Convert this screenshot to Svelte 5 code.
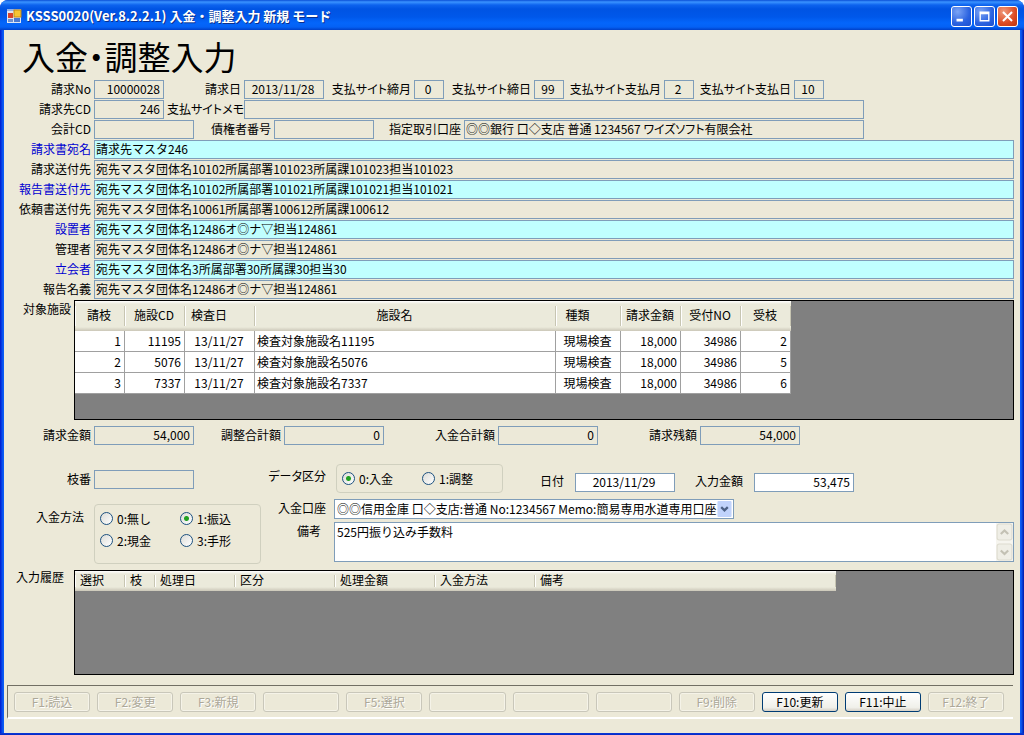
<script>
  const addressees = [
    { label: '請求書宛名', value: '請求先マスタ246', linked: true },
    { label: '請求送付先', value: '宛先マスタ団体名10102所属部署101023所属課101023担当101023' },
    {
      label: '報告書送付先',
      value: '宛先マスタ団体名10102所属部署101021所属課101021担当101021',
      linked: true
    },
    { label: '依頼書送付先', value: '宛先マスタ団体名10061所属部署100612所属課100612' },
    { label: '設置者', value: '宛先マスタ団体名12486オ◎ナ▽担当124861', linked: true },
    { label: '管理者', value: '宛先マスタ団体名12486オ◎ナ▽担当124861' },
    { label: '立会者', value: '宛先マスタ団体名3所属部署30所属課30担当30', linked: true },
    { label: '報告名義', value: '宛先マスタ団体名12486オ◎ナ▽担当124861' }
  ];

  const totals = [
    { label: '請求金額', value: '54,000' },
    { label: '調整合計額', value: '0' },
    { label: '入金合計額', value: '0' },
    { label: '請求残額', value: '54,000' }
  ];

  const facilityHeads = ['請枝', '施設CD', '検査日', '施設名', '種類', '請求金額', '受付NO', '受枝'];
  const facilities = [
    { no: 1, code: '11195', branch: 2 },
    { no: 2, code: '5076', branch: 5 },
    { no: 3, code: '7337', branch: 6 }
  ];

  const historyHeads = ['選択', '枝', '処理日', '区分', '処理金額', '入金方法', '備考'];

  const methods = ['0:無し', '1:振込', '2:現金', '3:手形'];
  const kinds = ['0:入金', '1:調整'];

  const functionKeys = [
    { label: 'F1:読込' },
    { label: 'F2:変更' },
    { label: 'F3:新規' },
    { label: '' },
    { label: 'F5:選択' },
    { label: '' },
    { label: '' },
    { label: '' },
    { label: 'F9:削除' },
    { label: 'F10:更新', enabled: true },
    { label: 'F11:中止', enabled: true },
    { label: 'F12:終了' }
  ];

  let method = $state('1:振込');
  let kind = $state('0:入金');
  let payDate = $state('2013/11/29');
  let amount = $state('53,475');
  let note = $state('525円振り込み手数料');
</script>

<div class="window">
  <header class="titlebar">
    <svg class="app-icon" viewBox="0 0 16 16">
      <rect x="0" y="1" width="14" height="14" fill="#dfe6f2" />
      <rect x="0" y="1" width="14" height="2" fill="#8fb0ea" />
      <rect x="1" y="5" width="5" height="5" fill="#d8442c" />
      <rect x="7" y="2" width="7" height="7" fill="#f6c634" stroke="#c58a12" />
      <rect x="1" y="11" width="5" height="3" fill="#6d8fd0" />
      <rect x="7" y="10" width="6" height="4" fill="#4b79d0" />
    </svg>
    <span class="caption">KSSS0020(Ver.8.2.2.1) 入金・調整入力 新規 モード</span>
    <button class="sys" aria-label="最小化">
      <svg viewBox="0 0 21 21"><rect x="5" y="13" width="7" height="3" fill="#fff" /></svg>
    </button>
    <button class="sys" aria-label="最大化">
      <svg viewBox="0 0 21 21">
        <path d="M5 5h11v11H5zM6.500 8v6.500h8V8z" fill="#fff" fill-rule="evenodd" />
      </svg>
    </button>
    <button class="sys close" aria-label="閉じる">
      <svg viewBox="0 0 21 21">
        <path d="M5.500 5.500l10 10M15.500 5.500l-10 10" stroke="#fff" stroke-width="2.200" />
      </svg>
    </button>
  </header>

  <main>
    <h1>入金・調整入力</h1>

    <section class="stack">
      <div class="row basic">
        <label for="bill-no">請求No</label>
        <input id="bill-no" class="num" value="10000028" readonly />
        <label for="bill-date">請求日</label>
        <input id="bill-date" class="mid" value="2013/11/28" readonly />
        <label for="close-month">支払サイト締月</label>
        <input id="close-month" class="mid" value="0" readonly />
        <label for="close-day">支払サイト締日</label>
        <input id="close-day" class="mid" value="99" readonly />
        <label for="pay-month">支払サイト支払月</label>
        <input id="pay-month" class="mid" value="2" readonly />
        <label for="pay-day">支払サイト支払日</label>
        <input id="pay-day" class="mid" value="10" readonly />
      </div>
      <div class="row memo">
        <label for="bill-cd">請求先CD</label>
        <input id="bill-cd" class="num" value="246" readonly />
        <label for="site-memo">支払サイトメモ</label>
        <input id="site-memo" readonly />
      </div>
      <div class="row account">
        <label for="acc-cd">会計CD</label>
        <input id="acc-cd" readonly />
        <label for="creditor">債権者番号</label>
        <input id="creditor" readonly />
        <label for="bank">指定取引口座</label>
        <input id="bank" value="◎◎銀行 口◇支店 普通 1234567 ワイズソフト有限会社" readonly />
      </div>
      {#each addressees as item, i (item.label)}
        <div class="row wide" class:linked={item.linked}>
          <label for="addr-{i}">{item.label}</label>
          <input id="addr-{i}" value={item.value} readonly />
        </div>
      {/each}
    </section>

    <section class="list">
      <h2>対象施設</h2>
      <div class="sheet facilities">
        <table>
          <colgroup>
            <col class="c50" /><col class="c60" /><col class="c70" /><col class="c300" />
            <col class="c65" /><col class="c60" /><col class="c60" /><col class="c50" />
          </colgroup>
          <thead>
            <tr>
              {#each facilityHeads as head}
                <th>{head}</th>
              {/each}
            </tr>
          </thead>
          <tbody>
            {#each facilities as f (f.no)}
              <tr>
                <td class="num">{f.no}</td>
                <td class="num">{f.code}</td>
                <td class="mid">13/11/27</td>
                <td>検査対象施設名{f.code}</td>
                <td class="mid">現場検査</td>
                <td class="num">18,000</td>
                <td class="num">34986</td>
                <td class="num">{f.branch}</td>
              </tr>
            {/each}
          </tbody>
        </table>
      </div>
    </section>

    <section class="row totals">
      {#each totals as t, i (t.label)}
        <label for="total-{i}">{t.label}</label>
        <input id="total-{i}" class="num" value={t.value} readonly />
      {/each}
    </section>

    <section class="entry">
      <div class="entry-left">
        <div class="row branch">
          <label for="branch">枝番</label>
          <input id="branch" readonly />
        </div>
        <div class="row method">
          <span class="name" id="method-name">入金方法</span>
          <div class="group" role="radiogroup" aria-labelledby="method-name">
            {#each methods as m (m)}
              <label class="radio">
                <input type="radio" name="method" value={m} bind:group={method} />{m}
              </label>
            {/each}
          </div>
        </div>
      </div>

      <div class="entry-right">
        <div class="row kind">
          <span class="name" id="kind-name">データ区分</span>
          <div class="group" role="radiogroup" aria-labelledby="kind-name">
            {#each kinds as k (k)}
              <label class="radio">
                <input type="radio" name="kind" value={k} bind:group={kind} />{k}
              </label>
            {/each}
          </div>
          <label for="pay-date">日付</label>
          <input id="pay-date" class="mid" bind:value={payDate} />
          <label for="amount">入力金額</label>
          <input id="amount" class="num" bind:value={amount} />
        </div>
        <div class="row bank">
          <label for="bank-account">入金口座</label>
          <div class="select">
            <select id="bank-account">
              <option>◎◎信用金庫 口◇支店:普通 No:1234567 Memo:簡易専用水道専用口座</option>
            </select>
            <svg viewBox="0 0 15 17">
              <rect width="15" height="17" rx="1" fill="#c1d3fb" />
              <path d="M4 6.500l3.500 3.500L11 6.500" fill="none" stroke="#4d6185" stroke-width="2.400" />
            </svg>
          </div>
        </div>
        <div class="row remark">
          <label for="note">備考</label>
          <div class="note">
            <textarea id="note" bind:value={note}></textarea>
            <div class="scroll">
              <svg viewBox="0 0 16 17">
                <rect x="1" y="1" width="14" height="15" rx="2" fill="#efeee6" stroke="#dddbcf" />
                <path d="M4.500 10.500L8 7l3.500 3.500" fill="none" stroke="#c3c1b4" stroke-width="2" />
              </svg>
              <svg viewBox="0 0 16 17">
                <rect x="1" y="1" width="14" height="15" rx="2" fill="#efeee6" stroke="#dddbcf" />
                <path d="M4.500 7L8 10.500 11.500 7" fill="none" stroke="#c3c1b4" stroke-width="2" />
              </svg>
            </div>
          </div>
        </div>
      </div>
    </section>

    <section class="list past">
      <h2>入力履歴</h2>
      <div class="sheet history">
        <table>
          <colgroup>
            <col class="c50" /><col class="c30" /><col class="c80" /><col class="c100" />
            <col class="c100" /><col class="c100" /><col class="c300" />
          </colgroup>
          <thead>
            <tr>
              {#each historyHeads as head}
                <th>{head}</th>
              {/each}
            </tr>
          </thead>
        </table>
      </div>
    </section>

    <footer>
      {#each functionKeys as key}
        <button disabled={!key.enabled}>{key.label}</button>
      {/each}
    </footer>
  </main>
</div>

<style>
  :global(body) {
    margin: 0;
    background: #fff;
  }

  .window,
  .window input,
  .window select,
  .window textarea,
  .window button {
    font-family: 'Noto Sans CJK JP', sans-serif;
    font-size: 12px;
    color: #000;
  }

  .window {
    display: flex;
    flex-direction: column;
    min-height: 100vh;
    box-sizing: border-box;
    padding: 0 4px 4px;
    background:
      linear-gradient(#0a3ad8, #0019b0) bottom / 100% 4px no-repeat,
      linear-gradient(90deg, #0019cf, #0b5cf5 3px, #0b5cf5 calc(100% - 3px), #0019a8);
    border-radius: 8px 8px 0 0;
    overflow: hidden;
  }

  /* --- Title bar --- */
  .titlebar {
    display: flex;
    align-items: center;
    gap: 2px;
    height: 30px;
    margin: 0 -4px;
    padding: 2px 6px 0 7px;
    box-sizing: border-box;
    background: linear-gradient(
      #0a4fd6,
      #3a93ff 2px,
      #0d63ee 5px,
      #0054e3 9px,
      #0058ea 17px,
      #0466fb 23px,
      #0461f5 27px,
      #0040c8 30px
    );
  }

  .app-icon {
    width: 16px;
    height: 16px;
  }

  .caption {
    flex: 1;
    margin-left: 1px;
    color: #fff;
    font-size: 13px;
    font-weight: 700;
    line-height: 18px;
    white-space: nowrap;
    text-shadow: 1px 1px 0 #0a2f8c;
  }

  .sys {
    width: 21px;
    height: 21px;
    box-sizing: border-box;
    padding: 0;
    border: 1px solid #fff;
    border-radius: 3px;
    background: radial-gradient(circle at 30% 25%, #7ba4f5, #2a62e0 60%, #1b4fcf);
  }

  .sys svg {
    display: block;
    width: 19px;
    height: 19px;
  }

  .close {
    background: radial-gradient(circle at 30% 25%, #f09a7c, #dc4a22 60%, #b93610);
  }

  /* --- Form --- */
  main {
    flex: 1;
    background: #ece9d8;
  }

  h1 {
    margin: 0;
    padding: 4px 0 0 18px;
    height: 50px;
    box-sizing: border-box;
    font-size: 33px;
    line-height: 44px;
    font-weight: 400;
    font-feature-settings: 'palt';
  }

  .stack {
    display: grid;
    row-gap: 1px;
  }

  .row {
    display: grid;
    column-gap: 3px;
    padding-right: 6px;
  }

  .row > label,
  .name,
  h2 {
    text-align: right;
    line-height: 18px;
    white-space: nowrap;
    font-feature-settings: 'palt';
  }

  .basic {
    grid-template-columns: 87px 70px 74px 80px 84px 30px 84px 30px 94px 30px 94px 30px;
  }

  .memo {
    grid-template-columns: 87px 70px 74px minmax(0, 620px);
  }

  .account {
    grid-template-columns: 87px 100px 74px 100px 84px minmax(0, 400px);
  }

  .wide {
    grid-template-columns: 87px 1fr;
  }

  .linked label {
    color: #0000d0;
  }

  .row > input {
    width: 100%;
    min-width: 0;
    height: 19px;
    box-sizing: border-box;
    margin: 0;
    padding: 0 3px 2px 1px;
    border: 1px solid #7f9db9;
    border-radius: 0;
    background: #fff;
    outline: none;
  }

  .row > input:read-only {
    background: #ece9d8;
  }

  .linked > input:read-only {
    background: #c0ffff;
  }

  .account > input {
    font-feature-settings: 'palt';
  }

  .num {
    text-align: right;
  }

  .mid {
    text-align: center;
  }

  /* --- Lists --- */
  .list {
    display: grid;
    grid-template-columns: 67px 1fr;
    column-gap: 3px;
    margin-top: 1px;
    padding-right: 6px;
  }

  h2 {
    margin: 0;
    font-size: 12px;
    font-weight: 400;
  }

  .sheet {
    box-sizing: border-box;
    border: 1px solid #000;
    background: #808080;
    overflow: hidden;
  }

  .facilities {
    min-height: 120px;
  }

  .history {
    min-height: 105px;
  }

  table {
    table-layout: fixed;
    border-collapse: separate;
    border-spacing: 0;
    width: 0;
  }

  .c30 { width: 30px; }
  .c50 { width: 50px; }
  .c60 { width: 60px; }
  .c65 { width: 65px; }
  .c70 { width: 70px; }
  .c80 { width: 80px; }
  .c100 { width: 100px; }
  .c300 { width: 301px; }

  th {
    height: 30px;
    box-sizing: border-box;
    padding: 0 4px 2px 2px;
    font-weight: 400;
    line-height: 18px;
    white-space: nowrap;
    background:
      linear-gradient(#c7c5b2, #c7c5b2) right center / 1px 20px no-repeat,
      linear-gradient(#fff, #fff) left center / 1px 20px no-repeat,
      linear-gradient(#fff, #ebeadb 3px, #ebeadb calc(100% - 4px), #cbc7b8);
  }

  .facilities th:nth-child(3),
  .facilities th:nth-child(4),
  .facilities th:nth-child(5) {
    padding-right: 24px;
  }

  .history th {
    height: 20px;
    padding: 0 5px 2px;
    text-align: left;
    background-size:
      1px 12px,
      1px 12px,
      auto;
  }

  td {
    height: 21px;
    box-sizing: border-box;
    padding: 0 3px 0 2px;
    border-right: 1px solid #a0a0a0;
    border-bottom: 1px solid #a0a0a0;
    background: #fff;
    line-height: 18px;
    white-space: nowrap;
  }

  /* --- Totals and entry --- */
  .totals {
    margin-top: 6px;
    grid-template-columns: 87px 100px 84px 100px 108px 100px 96px 100px;
  }

  .entry {
    display: grid;
    grid-template-columns: 257px 1fr;
    column-gap: 3px;
    margin-top: 19px;
  }

  .branch {
    grid-template-columns: 87px 100px;
    margin-top: 6px;
  }

  .method {
    grid-template-columns: 87px 167px;
    margin-top: 15px;
    padding-right: 0;
  }

  .method .name {
    padding: 4px 7px 0 0;
  }

  .group {
    display: grid;
    grid-template-columns: 1fr 1fr;
    box-sizing: border-box;
    border: 1px solid #d0d0bf;
    border-radius: 4px;
  }

  .method .group {
    height: 60px;
    padding: 2px 0 11px 5px;
  }

  .radio {
    display: flex;
    align-items: center;
    gap: 4px;
    white-space: nowrap;
  }

  .radio input {
    appearance: none;
    width: 13px;
    height: 13px;
    box-sizing: border-box;
    margin: 0;
    border: 1px solid #1c5180;
    border-radius: 50%;
    background: linear-gradient(135deg, #dcdcd7, #fff);
  }

  .radio input:checked {
    background:
      radial-gradient(circle, #21a121 0 2px, transparent 3px),
      linear-gradient(135deg, #dcdcd7, #fff);
  }

  .kind {
    grid-template-columns: 67px 169px 66px 100px 73px 100px;
  }

  .kind > .name {
    padding: 3px 5px 0 0;
  }

  .kind .group {
    height: 29px;
    margin: 0 0 0 2px;
    padding-left: 5px;
  }

  .kind > input {
    margin-top: 9px;
  }

  .kind > label:not(.radio) {
    padding: 8px 8px 0 0;
  }

  .bank {
    grid-template-columns: 67px minmax(0, 400px);
    margin-top: 6px;
  }

  .bank label {
    padding-right: 5px;
  }

  .select {
    position: relative;
    height: 20px;
  }

  select {
    appearance: none;
    display: block;
    width: 100%;
    height: 20px;
    box-sizing: border-box;
    padding: 0 16px 1px 2px;
    border: 1px solid #7f9db9;
    border-radius: 0;
    background: #fff;
    font-feature-settings: 'palt';
  }

  .select svg {
    position: absolute;
    top: 2px;
    right: 2px;
    width: 15px;
    height: 16px;
    pointer-events: none;
  }

  .remark {
    grid-template-columns: 67px 1fr;
    margin-top: 3px;
  }

  .remark label {
    padding-right: 10px;
  }

  .note {
    display: flex;
    height: 40px;
    box-sizing: border-box;
    border: 1px solid #7f9db9;
    background: #fff;
  }

  textarea {
    flex: 1;
    min-width: 0;
    padding: 0 2px;
    border: 0;
    outline: none;
    resize: none;
    overflow: hidden;
    line-height: 18px;
    background: transparent;
  }

  .scroll {
    display: flex;
    flex-direction: column;
    justify-content: space-between;
    width: 17px;
    background: #f6f5ef;
  }

  .scroll svg {
    width: 17px;
    height: 18px;
  }

  .past {
    margin-top: 6px;
  }

  .past h2 {
    padding-right: 7px;
    line-height: 14px;
  }

  /* --- Function keys --- */
  footer {
    display: grid;
    grid-template-columns: repeat(12, 1fr);
    column-gap: 7px;
    margin: 10px 7px 14px 3px;
    padding: 6px 9px 5px 6px;
    border-top: 1px solid #716f64;
    border-left: 1px solid #716f64;
    border-bottom: 2px solid #fff;
  }

  footer button {
    height: 20px;
    min-width: 0;
    padding: 0 0 1px;
    border: 1px solid #003c74;
    border-radius: 3px;
    background: linear-gradient(#fff, #f0f0ea 80%, #d6d0c5);
    line-height: 16px;
    white-space: nowrap;
  }

  footer button:disabled {
    border-color: #c9c7ba;
    background: #ece9d8;
    box-shadow: inset 0 0 0 1px #f5f3e8;
    color: #aca899;
    text-shadow: 1px 1px 0 #fff;
  }
</style>
